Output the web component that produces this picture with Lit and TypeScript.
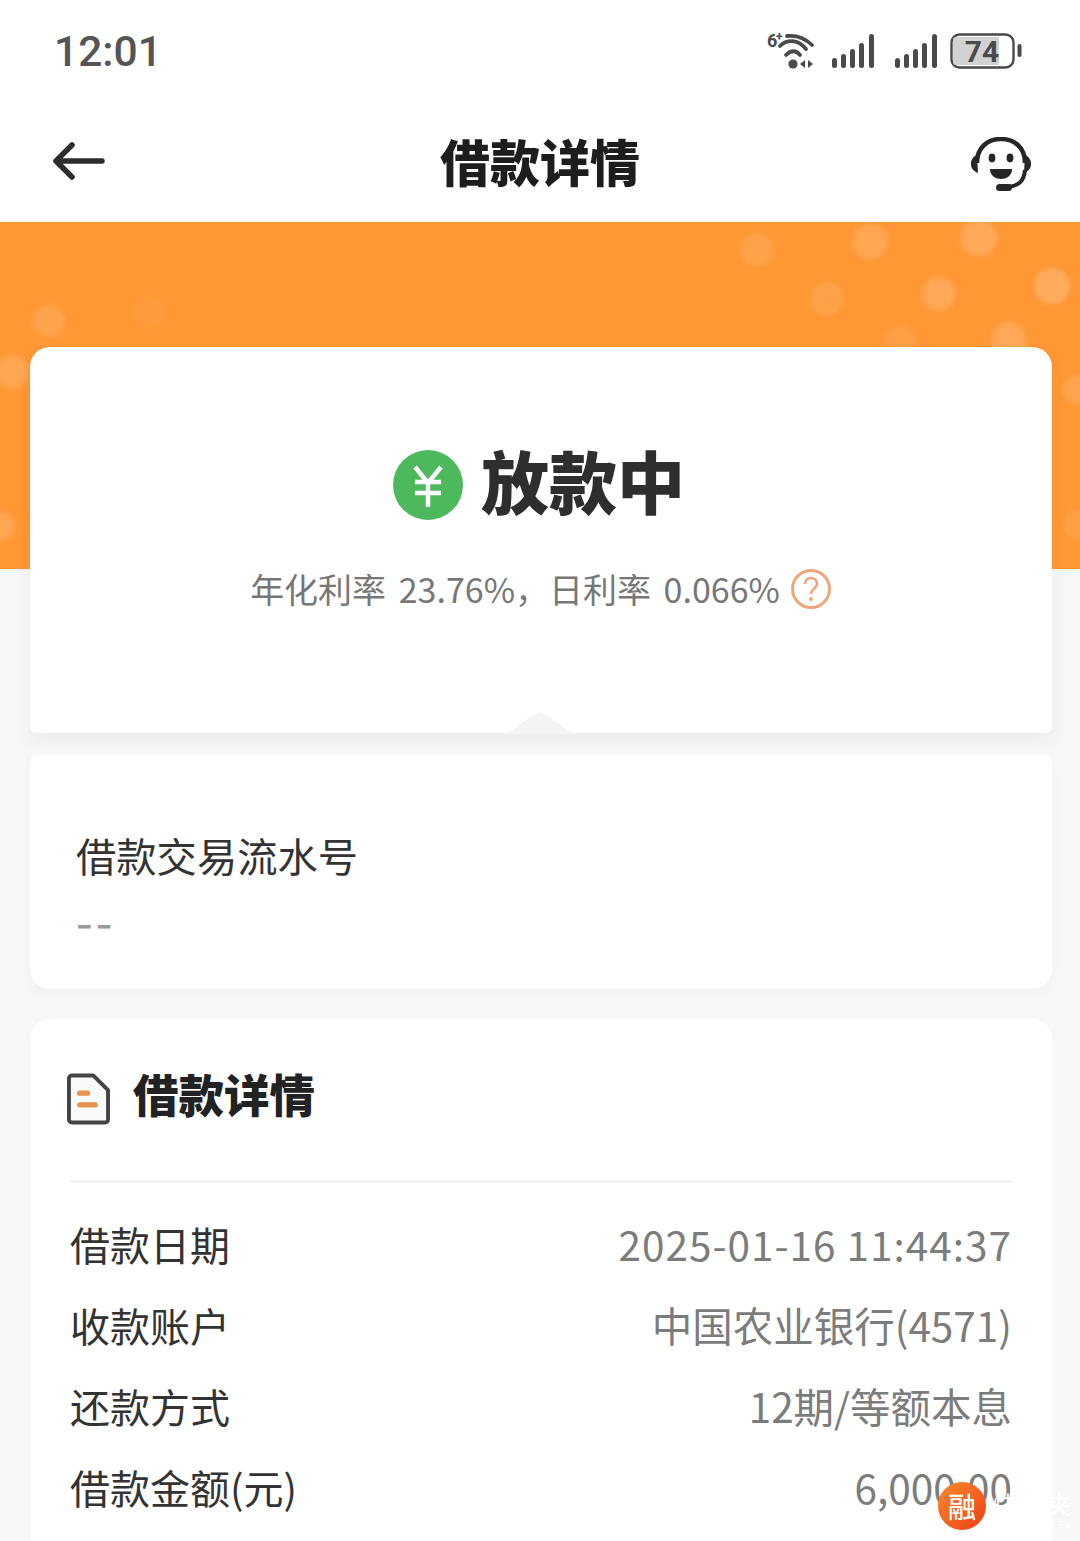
import { LitElement, html, css, svg } from "lit";
import { customElement } from "lit/decorators.js";

const DOTS = [
  [757, 250, 34, 0.1], [870, 242, 36, 0.14], [979, 238, 36, 0.18], [1052, 286, 36, 0.2],
  [939, 294, 34, 0.16], [827, 299, 34, 0.1], [1009, 340, 36, 0.16], [900, 342, 34, 0.08],
  [49, 321, 32, 0.12], [150, 312, 32, 0.04], [12, 372, 34, 0.14],
  [0, 526, 30, 0.14], [1078, 390, 30, 0.12], [1078, 525, 30, 0.08],
];

const ROWS = [
  ["借款日期", "2025-01-16 11:44:37"],
  ["收款账户", "中国农业银行(4571)"],
  ["还款方式", "12期/等额本息"],
  ["借款金额(元)", "6,000.00"],
];

const bars = svg`
  <rect x="0" y="24" width="5" height="10" rx="2.5"/>
  <rect x="9" y="20" width="5" height="14" rx="2.5"/>
  <rect x="18" y="15" width="5" height="19" rx="2.5"/>
  <rect x="27" y="9" width="5" height="25" rx="2.5"/>
  <rect x="37" y="0" width="5" height="34" rx="2.5"/>
`;

@customElement("app-root")
export class AppRoot extends LitElement {
  static styles = css`
    :host {
      display: block;
      height: 1541px;
      overflow: hidden;
      position: relative;
      background: #f7f7f7;
      font-family: "Noto Sans CJK SC", "Noto Sans", sans-serif;
      color: #777;
    }

    .top {
      background: #fff;
      height: 222px;
    }

    .status {
      height: 108px;
      box-sizing: border-box;
      padding: 26px 58px 0 54px;
      display: flex;
      justify-content: space-between;
      align-items: flex-start;
    }

    .time {
      font-family: "Roboto", "Noto Sans", sans-serif;
      font-size: 42.5px;
      font-weight: 500;
      line-height: 52px;
      color: #555;
    }

    .status-icons {
      display: flex;
      align-items: center;
    }

    .status-icons svg {
      display: block;
      fill: #4a4a4a;
    }

    .nav {
      height: 114px;
      display: flex;
      justify-content: space-between;
      align-items: center;
      padding: 0 48px 0 52px;
    }

    .nav .back {
      margin-bottom: 8px;
    }

    .nav h1 {
      margin: 0 0 10px 4px;
      font-size: 50px;
      font-weight: 900;
      color: #1d1d1d;
      line-height: 60px;
    }

    .banner {
      height: 347px;
      background: #ff9734;
      position: relative;
      overflow: hidden;
    }

    .dot {
      position: absolute;
      border-radius: 50%;
      background: #fff;
      filter: blur(2px);
    }

    .content {
      position: relative;
      margin-top: -222px;
      padding: 0 28px 0 30px;
      display: flex;
      flex-direction: column;
    }

    .card {
      background: #fff;
      border-radius: 20px;
    }

    .status-card {
      height: 386px;
      box-sizing: border-box;
      padding-top: 99px;
      border-radius: 20px 20px 6px 6px;
      box-shadow: 0 8px 18px rgba(0, 0, 0, 0.05);
      position: relative;
      display: flex;
      flex-direction: column;
      align-items: center;
    }

    .notch {
      position: absolute;
      left: 470px;
      bottom: -1px;
      width: 80px;
      height: 21px;
      display: block;
    }

    .state {
      display: flex;
      align-items: center;
      gap: 18px;
      height: 78px;
      margin-right: 4px;
    }

    .state span {
      font-size: 68px;
      font-weight: 900;
      color: #2e2e2e;
      line-height: 68px;
      padding-bottom: 10px;
    }

    .rate {
      display: flex;
      align-items: center;
      margin-top: 43px;
      height: 44px;
      font-size: 34px;
      word-spacing: 5px;
      line-height: 44px;
      color: #777;
      white-space: nowrap;
    }

    .rate svg {
      margin-left: 10px;
    }

    .serial {
      margin-top: 22px;
      height: 234px;
      box-sizing: border-box;
      padding: 74px 46px 0;
      border-radius: 6px 6px 20px 20px;
      box-shadow: 0 6px 14px rgba(0, 0, 0, 0.025);
    }

    .serial .label {
      font-size: 40.3px;
      line-height: 52px;
      color: #333;
    }

    .serial .value {
      margin-top: 16px;
      font-size: 48px;
      line-height: 44px;
      letter-spacing: 3px;
      color: #999;
    }

    .detail {
      margin-top: 30px;
      height: 600px;
      padding: 0 40px;
    }

    .detail-head {
      height: 164px;
      box-sizing: border-box;
      padding-top: 46px;
      display: flex;
      align-items: flex-start;
      gap: 23px;
      border-bottom: 3px solid #f3f3f3;
    }

    .detail-head svg {
      margin-top: 8px;
      margin-left: -3px;
    }

    .detail-head h2 {
      margin: 0;
      font-size: 45.5px;
      font-weight: 900;
      line-height: 56px;
      color: #222;
    }

    .rows {
      padding-top: 20px;
    }

    .row {
      height: 81px;
      display: flex;
      justify-content: space-between;
      align-items: center;
      font-size: 40px;
    }

    .row .k {
      color: #333;
    }

    .row .v {
      color: #7c7c7c;
      font-size: 40.5px;
    }

    .row:first-child .v {
      letter-spacing: 1px;
    }

    .mark {
      position: absolute;
      left: 938px;
      top: 1482px;
      width: 48px;
      height: 48px;
      border-radius: 50%;
      background: linear-gradient(135deg, #f98a2c, #ee3f18);
      color: #fff;
      font-size: 28px;
      font-weight: 500;
      line-height: 48px;
      text-align: center;
    }

    .mark-text {
      position: absolute;
      left: 993px;
      top: 1484px;
      width: 78px;
      display: flex;
      justify-content: space-between;
      color: #fff;
      font-size: 24px;
      line-height: 40px;
    }

    .mark-sub {
      position: absolute;
      left: 1052px;
      top: 1519px;
      color: #fff;
      font-size: 9px;
      letter-spacing: 1px;
      line-height: 12px;
    }
  `;

  private wifi() {
    return html`<svg width="50" height="50" viewBox="0 -6 50 50">
      <text x="0" y="15" font-size="18" font-weight="700" font-family="Roboto, sans-serif">6</text>
      <text x="9" y="9" font-size="12" font-weight="700" font-family="Roboto, sans-serif">+</text>
      <g fill="none" stroke="#4a4a4a" stroke-width="3.8" stroke-linecap="round">
        <path d="M20 4 C29 3 38 6 45 13" />
        <path d="M13 14 C20 7 31 7 39 17" />
        <path d="M19 23 C24 18 29 18 33 23" />
      </g>
      <circle cx="26" cy="32" r="4.6" />
      <path d="M38 28 v8 l-5 -4z M41 28 v8 l5 -4z" />
    </svg>`;
  }

  private signal(left: number) {
    return html`<svg width="42" height="34" viewBox="0 0 42 34" style="margin-left:${left}px">${bars}</svg>`;
  }

  private battery() {
    return html`<svg width="72" height="36" viewBox="0 0 72 36" style="margin-left:13px">
      <rect x="1.5" y="1.5" width="62" height="33" rx="8" fill="#fff" stroke="#4a4a4a" stroke-width="2.4" />
      <path d="M6 4 h43 v28 h-43 a3 3 0 0 1 -3 -3 v-22 a3 3 0 0 1 3 -3z" fill="#d2d2d2" />
      <rect x="67.5" y="11" width="4" height="13" rx="2" />
      <text x="32" y="29" text-anchor="middle" font-size="30" font-weight="700" font-family="Roboto, sans-serif">74</text>
    </svg>`;
  }

  render() {
    return html`
      <div class="top">
        <div class="status">
          <div class="time">12:01</div>
          <div class="status-icons">
            ${this.wifi()} ${this.signal(15)} ${this.signal(21)} ${this.battery()}
          </div>
        </div>
        <div class="nav">
          <svg class="back" width="54" height="40" viewBox="0 0 54 40" fill="none" stroke="#2c2c2c" stroke-width="5.5" stroke-linecap="round" stroke-linejoin="round">
            <path d="M50 20 H4 M20 4 L4 20 L20 36" />
          </svg>
          <h1>借款详情</h1>
          <svg width="62" height="56" viewBox="0 0 62 56">
            <path d="M7 26 C7 10 18 2 31 2 C44 2 55 10 55 26" fill="none" stroke="#262626" stroke-width="4.5" />
            <path d="M7 18 C2 20 1 24 1 27 C1 31 3 34 8 36 z M55 18 C60 20 61 24 61 27 C61 31 59 34 54 36 z" fill="#262626" />
            <path d="M55 33 C54 43 50 49 37 50" fill="none" stroke="#262626" stroke-width="4" />
            <rect x="26" y="47" width="16" height="7" rx="3.5" fill="#262626" />
            <ellipse cx="22" cy="21" rx="3.4" ry="4.4" fill="#262626" />
            <ellipse cx="40" cy="21" rx="3.4" ry="4.4" fill="#262626" />
            <path d="M20 32 H42 C42 39 36 42 31 42 C26 42 20 39 20 32z" fill="#262626" />
          </svg>
        </div>
      </div>

      <div class="banner">
        ${DOTS.map(
          ([x, y, s, o]) =>
            html`<div
              class="dot"
              style="left:${x - s / 2}px;top:${y - 222 - s / 2}px;width:${s}px;height:${s}px;opacity:${o}"
            ></div>`,
        )}
      </div>

      <div class="content">
        <div class="card status-card">
          <div class="state">
            <svg width="70" height="70" viewBox="0 0 70 70">
              <circle cx="35" cy="35" r="35" fill="#4db85c" />
              <path d="M22 17 L35 33 L48 17 M22 32 H48 M22 43 H48 M35 33 V57" fill="none" stroke="#fff" stroke-width="4.5" />
            </svg>
            <span>放款中</span>
          </div>
          <div class="rate">
            <span>年化利率 23.76%，日利率 0.066%</span>
            <svg width="42" height="42" viewBox="0 0 42 42">
              <circle cx="21" cy="21" r="18.5" fill="#fff" stroke="#f0a679" stroke-width="3" />
              <path d="M15 16 C15 12 18 10 21 10 C25 10 27 13 27 16 C27 20 21 21 21 26" fill="none" stroke="#f0a679" stroke-width="2.6" />
              <circle cx="21" cy="31" r="2" fill="#f0a679" />
            </svg>
          </div>
          <svg class="notch" viewBox="0 0 80 21">
            <path d="M0 21 C14 21 30 0 40 0 C50 0 66 21 80 21z" fill="#f4f4f4" />
          </svg>
        </div>

        <div class="card serial">
          <div class="label">借款交易流水号</div>
          <div class="value">--</div>
        </div>

        <div class="card detail">
          <div class="detail-head">
            <svg width="43" height="52" viewBox="0 0 44 52">
              <path d="M5 2 H27 L42 17 V47 a3 3 0 0 1 -3 3 H5 a3 3 0 0 1 -3 -3 V5 a3 3 0 0 1 3 -3z" fill="#fafafa" stroke="#444" stroke-width="4" stroke-linejoin="round" />
              <path d="M13 20 H21 M13 32 H29" fill="none" stroke="#e8924f" stroke-width="5.5" stroke-linecap="round" />
            </svg>
            <h2>借款详情</h2>
          </div>
          <div class="rows">
            ${ROWS.map(
              ([k, v]) => html`<div class="row"><span class="k">${k}</span><span class="v">${v}</span></div>`,
            )}
          </div>
        </div>
      </div>

      <div class="mark">融</div>
      <div class="mark-text"><span>快</span><span>夹</span></div>
      <div class="mark-sub">I FU</div>
    `;
  }
}
